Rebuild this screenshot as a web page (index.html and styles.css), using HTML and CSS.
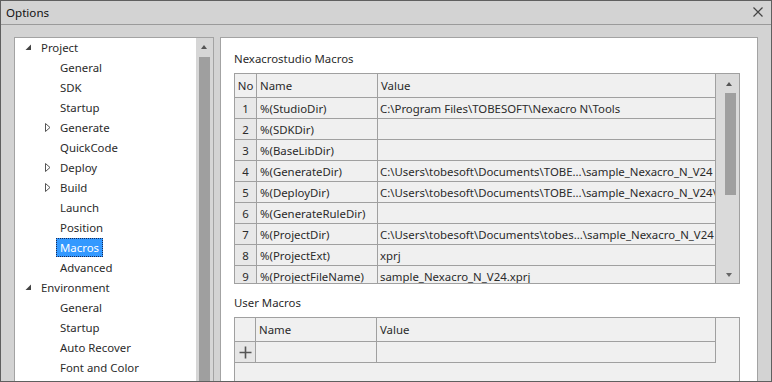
FILE: index.html
```html
<!DOCTYPE html>
<html>
<head>
<meta charset="utf-8">
<title>Options</title>
<link rel="stylesheet" href="styles.css">
</head>
<body>
<div class="window">
  <div class="titlebar">
    <span class="title">Options</span>
    <span class="close">
      <svg width="10" height="10" viewBox="0 0 10 10"><path d="M0.5 0.5 L9.5 9.5 M9.5 0.5 L0.5 9.5" stroke="#444" stroke-width="1.2" fill="none"/></svg>
    </span>
  </div>
  <div class="body">
    <div class="tree-panel">
      <ul class="tree">
        <li class="node lvl0"><span class="toggle"><svg width="7" height="7" viewBox="0 0 7 7"><polygon points="6,0.5 6,6 0.5,6" fill="#444"/></svg></span><span class="label">Project</span></li>
        <li class="node lvl1"><span class="toggle"></span><span class="label">General</span></li>
        <li class="node lvl1"><span class="toggle"></span><span class="label">SDK</span></li>
        <li class="node lvl1"><span class="toggle"></span><span class="label">Startup</span></li>
        <li class="node lvl1"><span class="toggle"><svg width="7" height="10" viewBox="0 0 7 10"><polygon points="0.5,0.5 5,4.5 0.5,8.5" fill="none" stroke="#555"/></svg></span><span class="label">Generate</span></li>
        <li class="node lvl1"><span class="toggle"></span><span class="label">QuickCode</span></li>
        <li class="node lvl1"><span class="toggle"><svg width="7" height="10" viewBox="0 0 7 10"><polygon points="0.5,0.5 5,4.5 0.5,8.5" fill="none" stroke="#555"/></svg></span><span class="label">Deploy</span></li>
        <li class="node lvl1"><span class="toggle"><svg width="7" height="10" viewBox="0 0 7 10"><polygon points="0.5,0.5 5,4.5 0.5,8.5" fill="none" stroke="#555"/></svg></span><span class="label">Build</span></li>
        <li class="node lvl1"><span class="toggle"></span><span class="label">Launch</span></li>
        <li class="node lvl1"><span class="toggle"></span><span class="label">Position</span></li>
        <li class="node lvl1 selected"><span class="toggle"></span><span class="label">Macros</span></li>
        <li class="node lvl1"><span class="toggle"></span><span class="label">Advanced</span></li>
        <li class="node lvl0"><span class="toggle"><svg width="7" height="7" viewBox="0 0 7 7"><polygon points="6,0.5 6,6 0.5,6" fill="#444"/></svg></span><span class="label">Environment</span></li>
        <li class="node lvl1"><span class="toggle"></span><span class="label">General</span></li>
        <li class="node lvl1"><span class="toggle"></span><span class="label">Startup</span></li>
        <li class="node lvl1"><span class="toggle"></span><span class="label">Auto Recover</span></li>
        <li class="node lvl1"><span class="toggle"></span><span class="label">Font and Color</span></li>
      </ul>
      <div class="vscroll tree-scroll">
        <span class="arrow-up"></span>
        <span class="thumb"></span>
      </div>
    </div>
    <div class="content-panel">
      <div class="section-label first">Nexacrostudio Macros</div>
      <div class="grid macros-grid">
        <div class="grid-body">
          <div class="row head">
            <div class="cell no">No</div><div class="cell">Name</div><div class="cell">Value</div>
          </div>
          <div class="row"><div class="cell no">1</div><div class="cell">%(StudioDir)</div><div class="cell val">C:\Program Files\TOBESOFT\Nexacro N\Tools</div></div>
          <div class="row"><div class="cell no">2</div><div class="cell">%(SDKDir)</div><div class="cell val"></div></div>
          <div class="row"><div class="cell no">3</div><div class="cell">%(BaseLibDir)</div><div class="cell val"></div></div>
          <div class="row"><div class="cell no">4</div><div class="cell">%(GenerateDir)</div><div class="cell val">C:\Users\tobesoft\Documents\TOBE...\sample_Nexacro_N_V24</div></div>
          <div class="row"><div class="cell no">5</div><div class="cell">%(DeployDir)</div><div class="cell val">C:\Users\tobesoft\Documents\TOBE...\sample_Nexacro_N_V24\</div></div>
          <div class="row"><div class="cell no">6</div><div class="cell">%(GenerateRuleDir)</div><div class="cell val"></div></div>
          <div class="row"><div class="cell no">7</div><div class="cell">%(ProjectDir)</div><div class="cell val">C:\Users\tobesoft\Documents\tobes...\sample_Nexacro_N_V24</div></div>
          <div class="row"><div class="cell no">8</div><div class="cell">%(ProjectExt)</div><div class="cell val">xprj</div></div>
          <div class="row"><div class="cell no">9</div><div class="cell">%(ProjectFileName)</div><div class="cell val">sample_Nexacro_N_V24.xprj</div></div>
        </div>
        <div class="vscroll grid-scroll">
          <span class="arrow-up"></span>
          <span class="thumb"></span>
          <span class="arrow-down"></span>
        </div>
      </div>
      <div class="section-label">User Macros</div>
      <div class="grid user-grid">
        <div class="urow head">
          <div class="cell rh"></div><div class="cell">Name</div><div class="cell">Value</div><div class="cell filler"></div>
        </div>
        <div class="urow data">
          <div class="cell rh add"><svg width="13" height="13" viewBox="0 0 13 13"><path d="M6.5 0.5 V12.5 M0.5 6.5 H12.5" stroke="#555" stroke-width="1.6" fill="none"/></svg></div><div class="cell"></div><div class="cell"></div>
        </div>
      </div>
    </div>
  </div>
</div>
</body>
</html>
```
FILE: styles.css
```css
* { box-sizing: border-box; }
html, body { margin: 0; padding: 0; background: #d3d3d3; }
body {
  font-family: "Noto Sans", "Open Sans", sans-serif;
  font-size: 11.4px;
  color: #2b2b2b;
}
.window {
  width: 772px;
  height: 382px;
  border: 1px solid #5f5f5f;
  background: #d3d3d3;
  overflow: hidden;
  display: flex;
  flex-direction: column;
}
.titlebar {
  height: 24px;
  flex: none;
  border-bottom: 1px solid #9a9a9a;
  display: flex;
  align-items: center;
  justify-content: space-between;
  padding: 0 8px 1px 5px;
}
.title { color: #111; font-size: 11.6px; }
.close { display: flex; align-items: center; padding-right: 0; }
.body {
  flex: 1;
  display: flex;
  gap: 6px;
  padding: 12px 0 0 13px;
  overflow: hidden;
}
.tree-panel {
  width: 200px;
  height: 400px;
  flex: none;
  border: 1px solid #a3a3a3;
  background: #fff;
  display: flex;
}
.tree {
  list-style: none;
  margin: 0;
  padding: 0;
  width: 181px;
}
.node {
  height: 20px;
  display: flex;
  align-items: center;
  white-space: nowrap;
}
.node.lvl0 { padding-left: 10px; }
.node.lvl1 { padding-left: 29px; }
.toggle {
  width: 15px;
  flex: none;
  display: flex;
  align-items: center;
  padding-left: 1px;
}
.lvl0 .toggle { padding-left: 0; margin-top: -2px; }
.label {
  align-self: flex-start;
  line-height: 17px;
  padding: 0 3px;
  margin-left: -3px;
  border: 1px solid transparent;
}
.selected .label {
  background: #3399ff;
  color: #fff;
  border: 1px dotted #1b2a55;
}
.vscroll {
  background: #d6d6d6;
  position: relative;
  flex: none;
}
.tree-scroll { width: 17px; }
.arrow-up, .arrow-down {
  position: absolute;
  width: 0;
  height: 0;
  border-left: 3.5px solid transparent;
  border-right: 3.5px solid transparent;
}
.arrow-up { border-bottom: 4px solid #555; }
.arrow-down { border-top: 4px solid #666; }
.tree-scroll .arrow-up { left: 5px; top: 7px; }
.thumb { position: absolute; background: #9f9f9f; }
.tree-scroll .thumb { left: 3px; width: 11px; top: 19px; height: 400px; }

.content-panel {
  width: 538px;
  height: 400px;
  flex: none;
  border: 1px solid #a3a3a3;
  background: #fff;
  padding-left: 13px;
}
.section-label {
  height: 20px;
  line-height: 20px;
  margin: 9px 0 4px;
  color: #2b2b2b;
}
.section-label.first { margin-top: 11px; }
.grid {
  width: 506px;
  border: 1px solid #a0a0a0;
  background: #f0f0f0;
}
.macros-grid {
  height: 211px;
  display: flex;
  overflow: hidden;
}
.grid-body { width: 481px; flex: none; overflow: hidden; }
.row {
  display: grid;
  grid-template-columns: 22px 121px 338px;
  height: 21px;
}
.row.head { height: 24px; }
.cell {
  border-right: 1px solid #a0a0a0;
  border-bottom: 1px solid #a0a0a0;
  padding-left: 3px;
  display: flex;
  align-items: center;
  white-space: nowrap;
  overflow: hidden;
  background: #f0f0f0;
}
.cell.val { padding-left: 2px; }
.cell.no { justify-content: center; padding-left: 0; background: #e8e8e8; }
.head .cell.no { background: #f0f0f0; }
.grid-scroll { width: 23px; background: #dadada; }
.grid-scroll .arrow-up { left: 10px; top: 8px; }
.grid-scroll .thumb { left: 9px; width: 11px; top: 19px; height: 102px; }
.grid-scroll .arrow-down { left: 10px; top: 199px; }

.user-grid { height: 80px; }
.urow { display: grid; }
.urow.head { grid-template-columns: 21px 121px 339px 23px; height: 24px; }
.urow.data { grid-template-columns: 21px 121px 339px; height: 21px; }
.cell.rh { padding-left: 0; justify-content: center; }
.cell.add { background: #e6e6e6; }
.cell.filler { border: none; }
```
